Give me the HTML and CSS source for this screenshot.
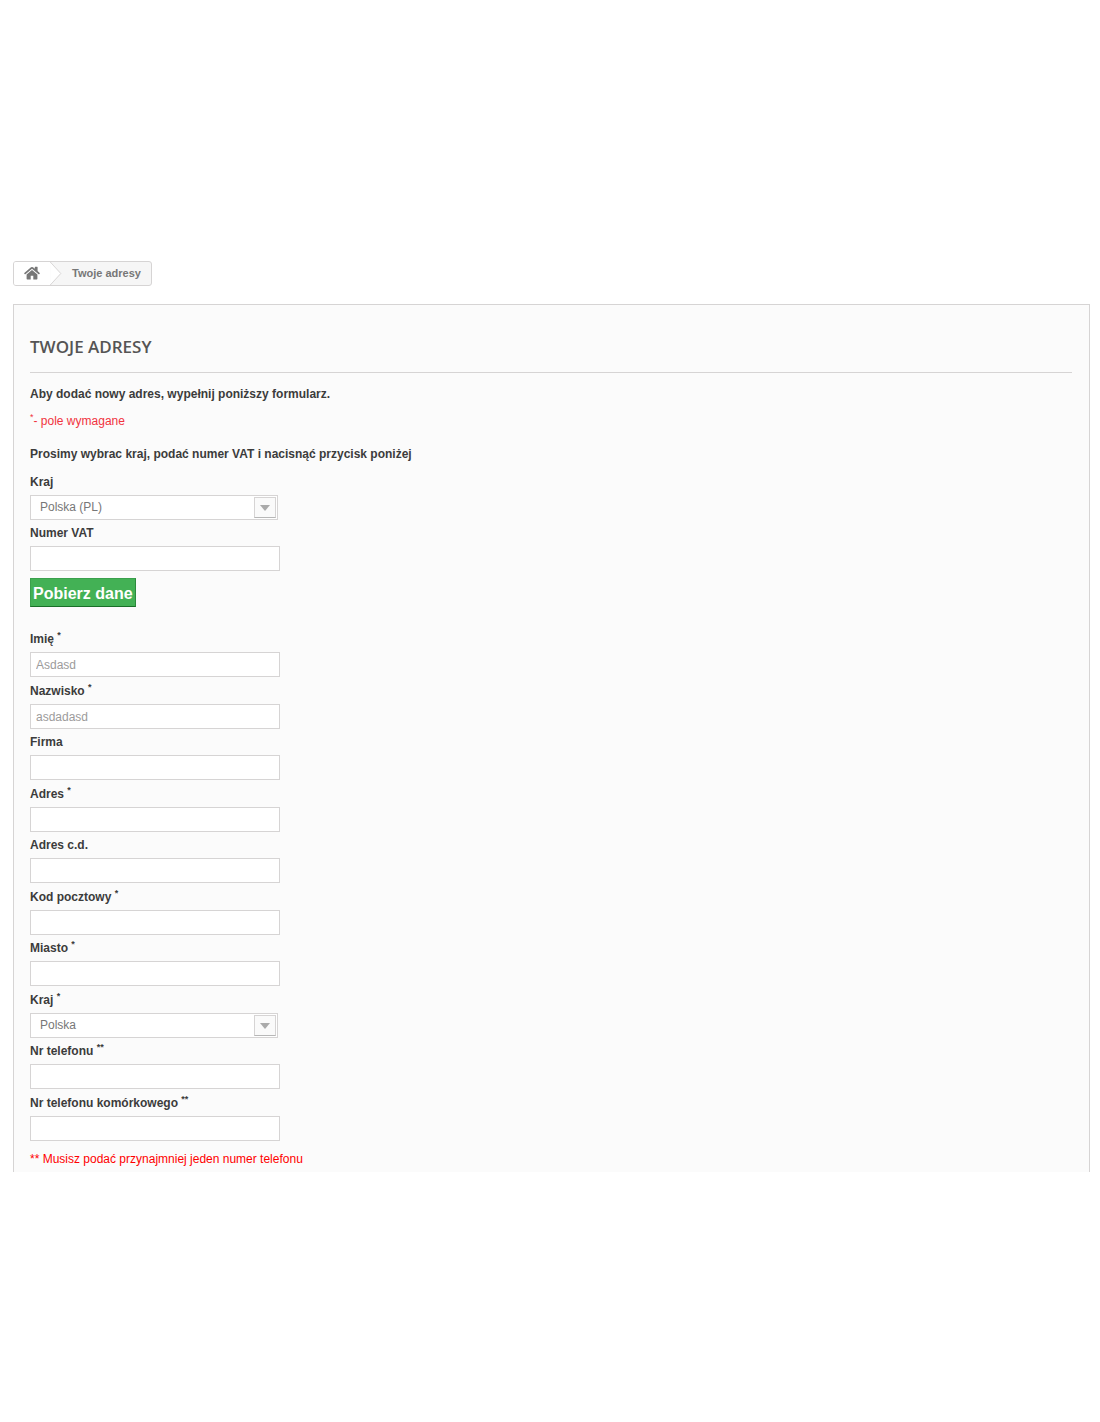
FILE: index.html
```html
<!DOCTYPE html>
<html lang="pl">
<head>
<meta charset="utf-8">
<title>Twoje adresy</title>
<meta name="viewport" content="width=device-width, initial-scale=1">
<link rel="stylesheet" href="styles.css">
</head>
<body>
<main class="page">
  <nav class="breadcrumb" aria-label="Breadcrumb">
    <a class="home" href="#" aria-label="Home">
      <svg class="home-icon" viewBox="0 0 16 14" aria-hidden="true"><path d="M8 3.9 2.6 8.4v4.4q0 .6.6.6h3.5V9.7h2.6v3.7h3.5q.6 0 .6-.6V8.4zM15.7 6.9 13.6 5.1V1.2q0-.4-.4-.4h-2q-.4 0-.4.4v1.6L9 1.3q-1-.8-2 0L.3 6.9q-.3.3-.1.6l.6.7q.3.3.6 0L8 2.8l6.6 5.4q.3.3.6 0l.6-.7q.2-.3-.1-.6z"/></svg>
    </a>
    <svg class="divider" viewBox="0 0 12 24" aria-hidden="true"><path class="divider-fill" d="M0 0 11 12 0 24z"/><path class="divider-line" d="M0 0 11 12 0 24"/></svg>
    <span class="current">Twoje adresy</span>
  </nav>

  <section class="box">
    <h1 class="heading">Twoje adresy</h1>
    <p class="intro">Aby dodać nowy adres, wypełnij poniższy formularz.</p>
    <p class="required-note"><sup>*</sup>- pole wymagane</p>
    <form class="form">
      <p class="intro vat-intro">Prosimy wybrac kraj, podać numer VAT i nacisnąć przycisk poniżej</p>
      <div class="field">
        <label for="vat-country">Kraj</label>
        <div class="select"><select id="vat-country"><option>Polska (PL)</option></select><span class="arrow"></span></div>
      </div>
      <div class="field"><label for="vat">Numer VAT</label><input id="vat" type="text"></div>
      <button class="fetch" type="button">Pobierz dane</button>

      <div class="address-fields">
        <div class="field"><label for="firstname">Imię <sup>*</sup></label><input id="firstname" type="text" value="Asdasd"></div>
        <div class="field"><label for="lastname">Nazwisko <sup>*</sup></label><input id="lastname" type="text" value="asdadasd"></div>
        <div class="field"><label for="company">Firma</label><input id="company" type="text"></div>
        <div class="field"><label for="address1">Adres <sup>*</sup></label><input id="address1" type="text"></div>
        <div class="field"><label for="address2">Adres c.d.</label><input id="address2" type="text"></div>
        <div class="field"><label for="postcode">Kod pocztowy <sup>*</sup></label><input id="postcode" type="text"></div>
        <div class="field"><label for="city">Miasto <sup>*</sup></label><input id="city" type="text"></div>
        <div class="field">
          <label for="country">Kraj <sup>*</sup></label>
          <div class="select"><select id="country"><option>Polska</option></select><span class="arrow"></span></div>
        </div>
        <div class="field"><label for="phone">Nr telefonu <sup>**</sup></label><input id="phone" type="tel"></div>
        <div class="field"><label for="mobile">Nr telefonu komórkowego <sup>**</sup></label><input id="mobile" type="tel"></div>
      </div>
      <p class="phone-note">** Musisz podać przynajmniej jeden numer telefonu</p>
    </form>
  </section>
</main>
</body>
</html>
```
FILE: styles.css
```css
* { box-sizing: border-box; }

body {
  margin: 0;
  background: #fff;
  color: #3c3c3c;
  font: 12px/18px "Liberation Sans", Arial, sans-serif;
}

p, h1 { margin: 0; }

.page { padding: 261px 10px 250px 13px; }

.breadcrumb {
  display: inline-flex;
  height: 25px;
  overflow: hidden;
  border: 1px solid #d6d4d4;
  border-radius: 3px;
  background: #f6f6f6;
  color: #777;
  font-size: 11px;
  font-weight: bold;
  line-height: 23px;
  vertical-align: top;
}

.home {
  display: flex;
  align-items: center;
  padding: 0 10px;
  background: #fff;
}

.home-icon { width: 16px; height: 14px; margin-bottom: 2px; fill: #777; }
.divider { width: 12px; height: 23px; }
.divider-fill { fill: #fff; }
.divider-line { fill: none; stroke: #d6d4d4; }
.current { padding: 0 10px; }

.box {
  margin-top: 18px;
  padding: 29px 17px 4px 16px;
  border: 1px solid #d6d4d4;
  border-bottom: 0;
  background: #fbfbfb;
}

.heading {
  margin-bottom: 12px;
  padding-bottom: 13px;
  border-bottom: 1px solid #d6d4d4;
  color: #555454;
  font: 600 17px/25px "Open Sans", sans-serif;
  text-transform: uppercase;
}

.intro { font-weight: bold; }

.required-note {
  margin-top: 9px;
  color: #f13340;
}

sup {
  position: relative;
  top: -5px;
  font-size: 9px;
  line-height: 0;
  vertical-align: baseline;
}

.vat-intro { margin: 15px 0 7px; }

.field {
  width: 250px;
  max-width: 100%;
  padding-bottom: 1px;
}

.address-fields .field:nth-child(odd) { padding-bottom: 2px; }

.field label {
  display: block;
  height: 25px;
  padding-top: 3px;
  font-weight: bold;
}

.field input,
.select {
  display: block;
  width: 100%;
  height: 25px;
  border: 1px solid #d6d4d4;
  background: #fff;
}

.field input {
  padding: 0 5px;
  color: #9c9b9b;
  font: inherit;
}

.select {
  display: flex;
  width: 248px;
  padding: 1px;
}

.select select {
  flex: 1;
  padding: 0 8px 1px;
  border: 0;
  background: #fff;
  color: #777;
  font: 12px "Liberation Sans", Arial, sans-serif;
  appearance: none;
}

.arrow {
  display: flex;
  align-items: center;
  justify-content: center;
  width: 22px;
  border: 1px solid #d6d4d4;
  border-bottom-color: #b7b7b7;
  background: #fafafa;
  pointer-events: none;
}

.arrow::before {
  border: 5px solid transparent;
  border-top: 6px solid #aaa;
  border-bottom: 0;
  content: "";
}

.fetch {
  display: block;
  height: 29px;
  margin: 6px 0 20px;
  padding: 1px 2px 0;
  border: 1px solid;
  border-color: #3aa04c #2c8a3c #196f28 #3aa04c;
  background: #43b155;
  color: #fff;
  font: bold 16px/25px "Liberation Sans", Arial, sans-serif;
}

.phone-note {
  margin-top: 8px;
  color: #f00;
}
```
